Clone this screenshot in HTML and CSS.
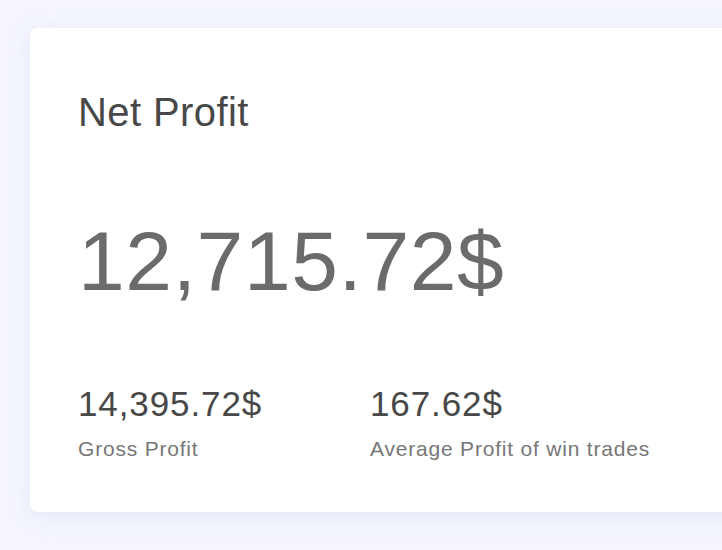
FILE: index.html
```html
<!DOCTYPE html>
<html lang="en">
<head>
<meta charset="utf-8">
<title>Net Profit</title>
<link rel="stylesheet" href="styles.css">
</head>
<body>
<main class="page">
  <section class="card">
    <h2 class="card-title">Net Profit</h2>
    <div class="main-value">12,715.72$</div>
    <div class="stats">
      <div class="stat">
        <div class="stat-value">14,395.72$</div>
        <div class="stat-label">Gross Profit</div>
      </div>
      <div class="stat">
        <div class="stat-value">167.62$</div>
        <div class="stat-label">Average Profit of win trades</div>
      </div>
    </div>
  </section>
</main>
</body>
</html>
```

FILE: styles.css
```css
html, body {
  margin: 0;
  padding: 0;
  background: #f5f6fd;
  overflow: hidden;
}

.page {
  width: 100vw;
  height: 100vh;
  box-sizing: border-box;
  padding: 28px 0 0 30px;
  overflow: hidden;
  font-family: "Liberation Sans", Arial, Helvetica, sans-serif;
}

.card {
  width: 760px;
  box-sizing: border-box;
  background: #ffffff;
  border-radius: 8px;
  box-shadow: 0 4px 22px rgba(150, 160, 225, 0.18);
  padding: 60px 0 51px 48px;
}

.card-title {
  margin: 0;
  font-size: 40px;
  line-height: 48px;
  font-weight: 400;
  letter-spacing: 0.4px;
  color: #484848;
}

.main-value {
  margin-top: 77px;
  font-size: 84px;
  line-height: 96px;
  letter-spacing: 0.6px;
  color: #6b6b6b;
}

.stats {
  display: flex;
  margin-top: 75px;
}

.stat {
  width: 292px;
}

.stat-value {
  font-size: 35px;
  line-height: 40px;
  letter-spacing: 0.9px;
  color: #484848;
}

.stat-label {
  margin-top: 13px;
  font-size: 21px;
  line-height: 24px;
  letter-spacing: 0.8px;
  color: #777777;
}
```
